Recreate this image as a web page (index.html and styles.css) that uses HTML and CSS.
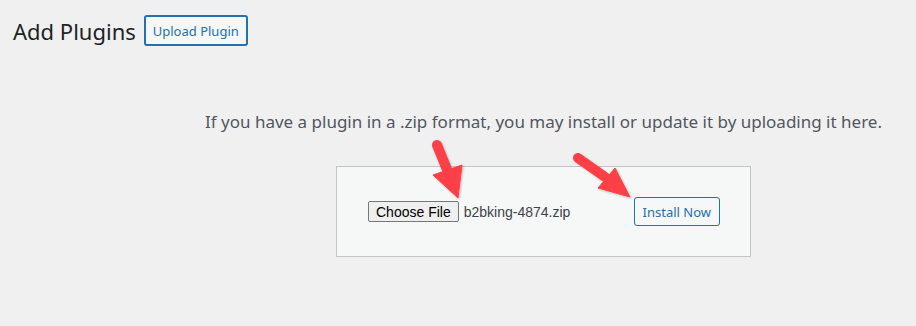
FILE: index.html
```html
<!DOCTYPE html>
<html lang="en">
<head>
    <meta charset="UTF-8">
    <meta name="viewport" content="width=device-width, initial-scale=1.0">
    <title>Add Plugins</title>
    <link rel="stylesheet" href="styles.css">
</head>
<body>
    <div class="wrap">
        <div class="page-header">
            <h1 class="page-title">Add Plugins</h1>
            <button class="upload-toggle">Upload Plugin</button>
        </div>

        <div class="upload-plugin">
            <p class="install-help">If you have a plugin in a .zip format, you may install or update it by uploading it here.</p>
            <form class="upload-form">
                <div class="file-field">
                    <button type="button" class="file-button">Choose File</button>
                    <span class="file-name">b2bking-4874.zip</span>
                </div>
                <button type="button" class="install-button">Install Now</button>
            </form>
        </div>
    </div>

    <!-- annotation arrows drawn over the screenshot -->
    <svg class="arrows" width="916" height="326" viewBox="0 0 916 326">
        <defs>
            <filter id="shadow" x="-20%" y="-20%" width="140%" height="140%">
                <feDropShadow dx="1" dy="1" stdDeviation="1.2" flood-color="#000" flood-opacity="0.25"/>
            </filter>
        </defs>
        <g fill="#fd4146" stroke="#fd4146" filter="url(#shadow)">
            <line x1="437" y1="145" x2="448" y2="172" stroke-width="10" stroke-linecap="round"/>
            <polygon points="433,175 462,165 458,198" stroke-width="1" stroke-linejoin="round"/>
            <line x1="578" y1="158" x2="605" y2="177" stroke-width="10" stroke-linecap="round"/>
            <polygon points="615,168 598,188 630,197" stroke-width="1" stroke-linejoin="round"/>
        </g>
    </svg>
</body>
</html>
```

FILE: styles.css
```css
body, html {
    margin: 0;
    padding: 0;
    height: 100%;
    background-color: #f0f0f1;
    color: #3c434a;
    font-family: "Noto Sans", "Open Sans", sans-serif;
    overflow: hidden;
}
.wrap {
    padding: 15px 0 0 13px;
}
.page-header {
    display: flex;
    align-items: center;
    gap: 8px;
}
.page-title {
    margin: 0;
    font-size: 22px;
    font-weight: 400;
    line-height: 30px;
    color: #1d2327;
}
.upload-toggle {
    height: 31px;
    padding: 0 7px;
    font-family: inherit;
    font-size: 13px;
    color: #2271b1;
    background-color: #f6f7f7;
    border: 2px solid #2271b1;
    border-radius: 3px;
}
.upload-plugin {
    margin-left: 158px;
    text-align: center;
}
.install-help {
    margin: 64px 0 32px;
    font-size: 17px;
    line-height: 24px;
    color: #50575e;
}
.upload-form {
    width: 352px;
    height: 89px;
    margin: 0 auto;
    padding: 0 30px 0 31px;
    display: flex;
    align-items: center;
    justify-content: space-between;
    background-color: #f6f7f7;
    border: 1px solid #c3c4c7;
}
.file-field {
    display: flex;
    align-items: center;
    gap: 5px;
}
.file-button {
    height: 21px;
    padding: 0 7px;
    font-family: "Liberation Sans", Arial, sans-serif;
    font-size: 14px;
    color: #000;
    background-color: #efefef;
    border: 1px solid #767676;
    border-radius: 2px;
}
.file-name {
    font-family: "Liberation Sans", Arial, sans-serif;
    font-size: 14px;
    color: #3c434a;
}
.install-button {
    height: 29px;
    padding: 0 8px;
    font-family: inherit;
    font-size: 13px;
    color: #2271b1;
    background-color: #f6f7f7;
    border: 1px solid #2271b1;
    border-radius: 3px;
}
.arrows {
    position: absolute;
    top: 0;
    left: 0;
    pointer-events: none;
}
```
